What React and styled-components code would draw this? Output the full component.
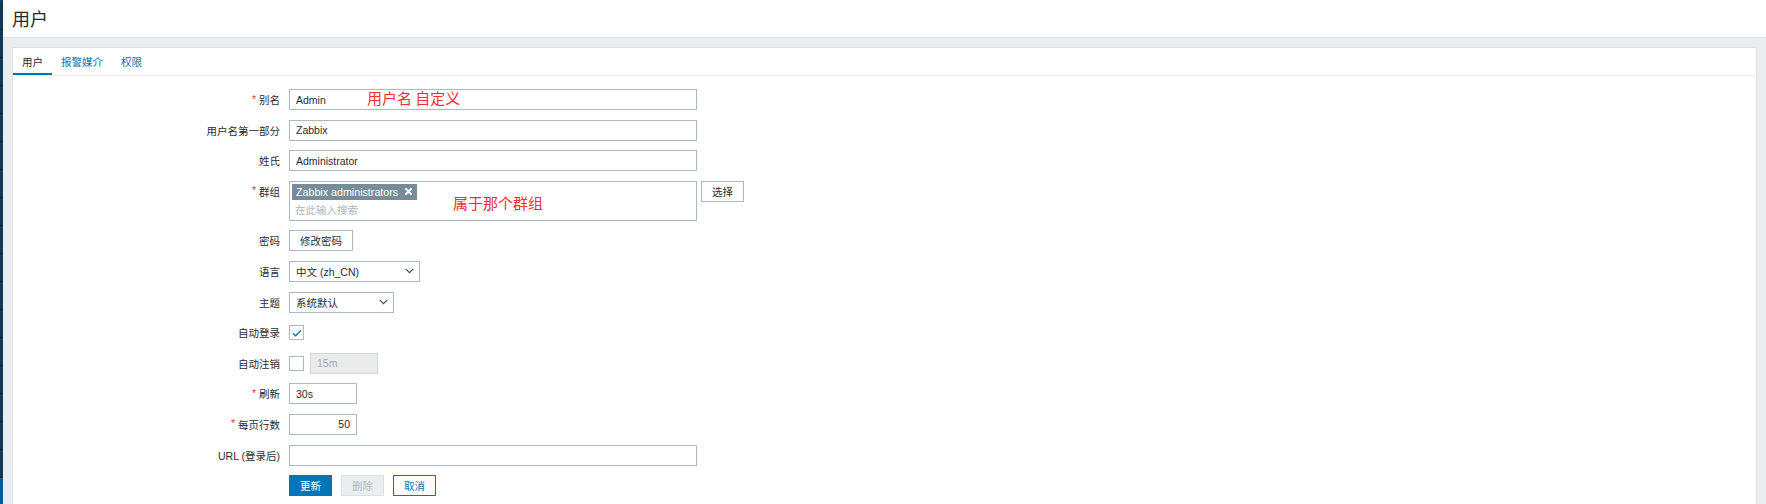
import React from 'react';
import styled, {createGlobalStyle} from 'styled-components';

const GlobalStyle = createGlobalStyle`
  html, body {
    margin: 0;
    padding: 0;
    background: #fff;
  }
  body {
    font-family: "Liberation Sans", Arial, "Noto Sans CJK SC", sans-serif;
    font-size: 10.5px;
    color: #1f2c33;
  }
  * { box-sizing: border-box; }
`;

const Page = styled.div`
  display: flex;
  height: 504px;
  overflow: hidden;
`;

const Sidebar = styled.nav`
  width: 3px;
  flex: none;
  display: flex;
  flex-direction: column;
  background: #0b4468;
  padding-top: 2px;
`;

const NavItem = styled.div`
  flex: none;
  height: 28px;
  border-bottom: 1px solid #072a42;
  background: ${p => (p.$active ? '#0b5d91' : '#0c3a5a')};
`;

const Main = styled.main`
  flex: 1;
  min-width: 0;
  display: flex;
  flex-direction: column;
  background: #e9edf0;
`;

const Header = styled.header`
  height: 38px;
  flex: none;
  display: flex;
  align-items: center;
  padding: 0 0 2px 9px;
  background: #fff;
  border-bottom: 1px solid #dfe4e7;
`;

const Title = styled.h1`
  margin: 0;
  font-family: "Noto Sans CJK SC", sans-serif;
  font-size: 18px;
  font-weight: normal;
  color: #1f2c33;
`;

const Content = styled.div`
  flex: 1;
  display: flex;
  padding: 9px 9px 0 9px;
`;

const Panel = styled.section`
  flex: 1;
  background: #fff;
  border: 1px solid #dfe4e7;
  border-bottom: none;
`;

const TabList = styled.ul`
  display: flex;
  margin: 0;
  padding: 0;
  list-style: none;
  height: 28px;
  border-bottom: 1px solid #ebeef0;
`;

const Tab = styled.li`
  display: flex;
  align-items: center;
  padding: 0 9px 1px;
  color: ${p => (p.$active ? '#1f2c33' : '#0275b8')};
  box-shadow: ${p => (p.$active ? 'inset 0 -2px 0 #0275b8' : 'none')};
  cursor: pointer;
`;

const Form = styled.div`
  display: flex;
  flex-direction: column;
  gap: 9.6px;
  padding: 13px 0 0 9px;
`;

const Row = styled.div`
  display: grid;
  grid-template-columns: 258px 1fr;
  column-gap: 9px;
`;

const Label = styled.label`
  height: 21px;
  display: flex;
  align-items: center;
  justify-content: flex-end;
  white-space: nowrap;
  &::before {
    content: ${p => (p.$required ? "'*'" : 'none')};
    color: #e33734;
    margin-right: 3px;
    position: relative;
    top: -1px;
  }
`;

const Field = styled.div`
  position: relative;
  display: flex;
  align-items: ${p => (p.$top ? 'flex-start' : 'center')};
  gap: ${p => p.$gap || 0}px;
  min-height: 21px;
`;

const TextBox = styled.input`
  width: ${p => p.$w}px;
  height: 21px;
  padding: 0 6px;
  border: 1px solid ${p => (p.disabled ? '#cfd8dc' : '#acbbc2')};
  background: ${p => (p.disabled ? '#ebebeb' : '#fff')};
  color: ${p => (p.disabled ? '#9fadb4' : '#1f2c33')};
  font: inherit;
  text-align: ${p => (p.$right ? 'right' : 'left')};
  outline: none;
`;

const MultiSelect = styled.div`
  width: 408px;
  height: 40px;
  border: 1px solid #acbbc2;
  padding: 2px;
`;

const Tag = styled.span`
  display: inline-flex;
  align-items: center;
  gap: 7px;
  height: 16px;
  padding: 0 5px 0 4px;
  background: #768d99;
  color: #fff;
  font-size: 10.7px;
`;

const Placeholder = styled.div`
  margin-top: 2px;
  padding-left: 3px;
  line-height: 16px;
  color: #a9b6bc;
`;

const Button = styled.button`
  height: 21px;
  padding: 0 10px;
  font: inherit;
  white-space: nowrap;
  cursor: pointer;
  border: 1px solid ${p => ({primary: '#0275b8', disabled: '#dbe1e4', alt: '#0275b8'}[p.$kind] || '#acbbc2')};
  background: ${p => ({primary: '#0275b8', disabled: '#ebeef0'}[p.$kind] || '#fff')};
  color: ${p => ({primary: '#fff', disabled: '#acbbc2', alt: '#0275b8'}[p.$kind] || '#1f2c33')};
`;

const Select = styled.div`
  width: ${p => p.$w}px;
  height: 21px;
  display: flex;
  align-items: center;
  justify-content: space-between;
  padding: 0 5px 0 6px;
  border: 1px solid #acbbc2;
  background: #fff;
`;

const Checkbox = styled.span`
  width: 15px;
  height: 15px;
  display: inline-flex;
  align-items: center;
  justify-content: center;
  border: 1px solid #acbbc2;
  background: #fff;
`;

const Buttons = styled.div`
  display: flex;
  gap: 9px;
`;

const Note = styled.span`
  position: absolute;
  left: ${p => p.$x}px;
  top: ${p => p.$y}px;
  font-family: "Noto Sans CJK SC", sans-serif;
  font-size: 15px;
  line-height: 20px;
  color: #f5302e;
  white-space: nowrap;
  pointer-events: none;
`;

const Chevron = () => (
  <svg width="9" height="6" viewBox="0 0 9 6">
    <path d="M0.7 0.8 L4.5 4.6 L8.3 0.8" fill="none" stroke="#3d4a52" strokeWidth="1.2" />
  </svg>
);

const Check = () => (
  <svg width="10" height="8" viewBox="0 0 10 8">
    <path d="M1 4.2 L3.7 6.8 L9 1.2" fill="none" stroke="#0275b8" strokeWidth="1.3" />
  </svg>
);

const Cross = () => (
  <svg width="7" height="7" viewBox="0 0 7 7">
    <path d="M1 1 L6 6 M6 1 L1 6" fill="none" stroke="#fff" strokeWidth="2" strokeLinecap="round" />
  </svg>
);

const nav = Array.from({length: 18}, (_, i) => i);

const App = () => {
  return (
    <Page>
      <GlobalStyle />
      <Sidebar>
        {nav.map(i => (
          <NavItem key={i} $active={i === 17} />
        ))}
      </Sidebar>
      <Main>
        <Header>
          <Title>用户</Title>
        </Header>
        <Content>
          <Panel>
            <TabList>
              <Tab $active>用户</Tab>
              <Tab>报警媒介</Tab>
              <Tab>权限</Tab>
            </TabList>
            <Form>
              <Row>
                <Label $required>别名</Label>
                <Field>
                  <TextBox $w={408} defaultValue="Admin" />
                  <Note $x={78} $y={-1}>用户名 自定义</Note>
                </Field>
              </Row>
              <Row>
                <Label>用户名第一部分</Label>
                <Field>
                  <TextBox $w={408} defaultValue="Zabbix" />
                </Field>
              </Row>
              <Row>
                <Label>姓氏</Label>
                <Field>
                  <TextBox $w={408} defaultValue="Administrator" />
                </Field>
              </Row>
              <Row>
                <Label $required>群组</Label>
                <Field $top $gap={4}>
                  <MultiSelect>
                    <Tag>
                      Zabbix administrators
                      <Cross />
                    </Tag>
                    <Placeholder>在此输入搜索</Placeholder>
                  </MultiSelect>
                  <Button>选择</Button>
                  <Note $x={164} $y={12}>属于那个群组</Note>
                </Field>
              </Row>
              <Row>
                <Label>密码</Label>
                <Field>
                  <Button>修改密码</Button>
                </Field>
              </Row>
              <Row>
                <Label>语言</Label>
                <Field>
                  <Select $w={131}>
                    <span>中文 (zh_CN)</span>
                    <Chevron />
                  </Select>
                </Field>
              </Row>
              <Row>
                <Label>主题</Label>
                <Field>
                  <Select $w={105}>
                    <span>系统默认</span>
                    <Chevron />
                  </Select>
                </Field>
              </Row>
              <Row>
                <Label>自动登录</Label>
                <Field>
                  <Checkbox>
                    <Check />
                  </Checkbox>
                </Field>
              </Row>
              <Row>
                <Label>自动注销</Label>
                <Field $gap={6}>
                  <Checkbox />
                  <TextBox $w={68} defaultValue="15m" disabled />
                </Field>
              </Row>
              <Row>
                <Label $required>刷新</Label>
                <Field>
                  <TextBox $w={68} defaultValue="30s" />
                </Field>
              </Row>
              <Row>
                <Label $required>每页行数</Label>
                <Field>
                  <TextBox $w={68} $right defaultValue="50" />
                </Field>
              </Row>
              <Row>
                <Label>URL (登录后)</Label>
                <Field>
                  <TextBox $w={408} defaultValue="" />
                </Field>
              </Row>
              <Row>
                <span />
                <Buttons>
                  <Button $kind="primary">更新</Button>
                  <Button $kind="disabled">删除</Button>
                  <Button $kind="alt">取消</Button>
                </Buttons>
              </Row>
            </Form>
          </Panel>
        </Content>
      </Main>
    </Page>
  );
};

export default App;
